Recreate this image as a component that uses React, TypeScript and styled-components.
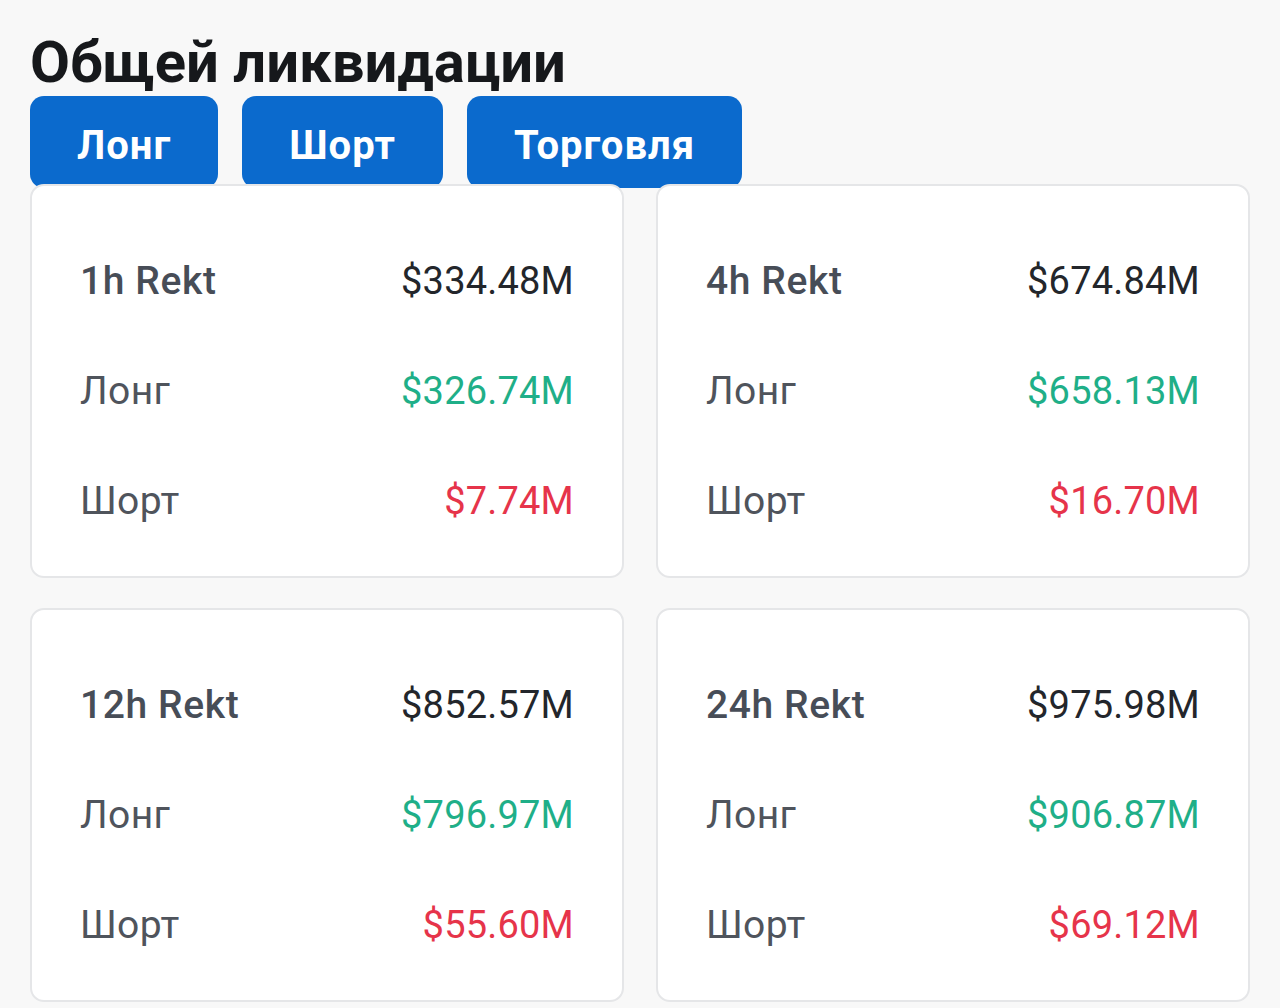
import React from "react";
import styled, { createGlobalStyle } from "styled-components";

const GlobalStyle = createGlobalStyle`
  html, body {
    margin: 0;
    padding: 0;
    background: #f8f8f8;
  }
  body {
    font-family: Roboto, "Noto Sans", sans-serif;
  }
`;

type Tone = "plain" | "up" | "down";

interface Row {
  label: string;
  value: string;
  tone: Tone;
  head?: boolean;
}

const periods: { name: string; total: string; long: string; short: string }[] = [
  { name: "1h Rekt", total: "$334.48M", long: "$326.74M", short: "$7.74M" },
  { name: "4h Rekt", total: "$674.84M", long: "$658.13M", short: "$16.70M" },
  { name: "12h Rekt", total: "$852.57M", long: "$796.97M", short: "$55.60M" },
  { name: "24h Rekt", total: "$975.98M", long: "$906.87M", short: "$69.12M" },
];

const tabs = ["Лонг", "Шорт", "Торговля"];

export default function App() {
  return (
    <>
      <GlobalStyle />
      <Page>
        <Title>Общей ликвидации</Title>
        <Tabs>
          {tabs.map((t) => (
            <Tab key={t} type="button">
              {t}
            </Tab>
          ))}
        </Tabs>
        <Grid>
          {periods.map((p) => {
            const rows: Row[] = [
              { label: p.name, value: p.total, tone: "plain", head: true },
              { label: "Лонг", value: p.long, tone: "up" },
              { label: "Шорт", value: p.short, tone: "down" },
            ];
            return (
              <Card key={p.name}>
                {rows.map((r) => (
                  <StatRow key={r.label}>
                    <Label $head={r.head}>{r.label}</Label>
                    <Value $tone={r.tone}>{r.value}</Value>
                  </StatRow>
                ))}
              </Card>
            );
          })}
        </Grid>
      </Page>
    </>
  );
}

const Page = styled.div`
  padding: 30px 30px 0 30px;
  box-sizing: border-box;
  width: 1280px;
`;

const Title = styled.h1`
  margin: 0 0 2px 0;
  font-family: Roboto, "Noto Sans", sans-serif;
  font-weight: 700;
  font-size: 58px;
  line-height: 64px;
  letter-spacing: 0;
  color: #16181b;
`;

const Tabs = styled.div`
  display: flex;
  gap: 24px;
`;

const Tab = styled.button`
  height: 92px;
  padding: 6px 47px 0;
  border: none;
  border-radius: 14px;
  background: #0b6acd;
  color: #ffffff;
  font-family: Roboto, "Noto Sans", sans-serif;
  font-weight: 700;
  font-size: 40px;
  letter-spacing: 1px;
  cursor: pointer;
`;

const Grid = styled.div`
  position: relative;
  z-index: 1;
  margin-top: -4px;
  display: grid;
  grid-template-columns: 594px 594px;
  column-gap: 32px;
  row-gap: 30px;
`;

const Card = styled.div`
  box-sizing: border-box;
  height: 394px;
  background: #ffffff;
  border: 2px solid #e5e6e8;
  border-radius: 14px;
  padding: 60px 48px 40px 48px;
  display: flex;
  flex-direction: column;
  gap: 40px;
`;

const StatRow = styled.div`
  display: flex;
  justify-content: space-between;
  align-items: center;
  height: 70px;
`;

const Label = styled.span<{ $head?: boolean }>`
  font-size: 39px;
  font-weight: ${(p) => (p.$head ? 500 : 400)};
  letter-spacing: ${(p) => (p.$head ? "0.6px" : "0.4px")};
  color: ${(p) => (p.$head ? "#474d57" : "#4f545c")};
`;

const toneColor: Record<Tone, string> = {
  plain: "#23262b",
  up: "#1faf88",
  down: "#e6344a",
};

const Value = styled.span<{ $tone: Tone }>`
  font-size: 38px;
  font-weight: 400;
  letter-spacing: 0.2px;
  color: ${(p) => toneColor[p.$tone]};
`;
